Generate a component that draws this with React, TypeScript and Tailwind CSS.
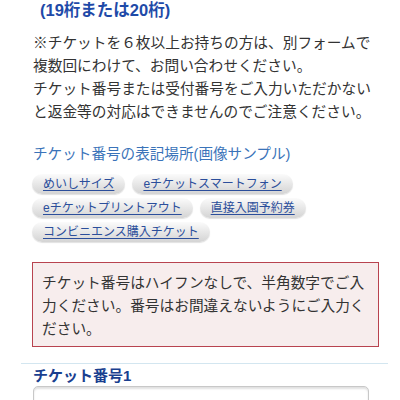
import React from "react";

const font = { fontFamily: '"Liberation Sans", "Noto Sans CJK JP", sans-serif' };

function Pill({ children }: { children: React.ReactNode }) {
  return (
    <a className="inline-flex items-center h-[20px] px-[11px] rounded-full bg-linear-to-b from-[#fbfbfb] to-[#d4d4d4] shadow-[0_1px_1px_rgba(0,0,0,0.12)] text-[12px] leading-[20px] text-[#2b4e9b] underline underline-offset-2 whitespace-nowrap">
      {children}
    </a>
  );
}

export default function App() {
  return (
    <div className="w-[400px] h-[400px] overflow-hidden bg-white" style={font}>
      <div className="pl-[40px] text-[16.5px] font-bold leading-[20px] text-[#1e4aa8]">(19桁または20桁)</div>

      <div className="pl-[33px] mt-[12px] text-[14.7px] leading-[23px] text-[#333333] whitespace-nowrap">
        <div>※チケットを６枚以上お持ちの方は、別フォームで</div>
        <div>複数回にわけて、お問い合わせください。</div>
        <div>チケット番号または受付番号をご入力いただかない</div>
        <div>と返金等の対応はできませんのでご注意ください。</div>
      </div>

      <div className="pl-[33px] mt-[20px] text-[14.6px] leading-[20px] text-[#3a73b9] whitespace-nowrap">
        チケット番号の表記場所(画像サンプル)
      </div>

      <div className="pl-[32px] mt-[10px] flex flex-col gap-[4px]">
        <div className="flex gap-[7px]">
          <Pill>めいしサイズ</Pill>
          <Pill>eチケットスマートフォン</Pill>
        </div>
        <div className="flex gap-[7px]">
          <Pill>eチケットプリントアウト</Pill>
          <Pill>直接入園予約券</Pill>
        </div>
        <div className="flex gap-[7px]">
          <Pill>コンビニエンス購入チケット</Pill>
        </div>
      </div>

      <div className="ml-[32px] w-[347px] mt-[20px] border border-[#b8434f] bg-[#f7eded] pl-[9px] pt-[9px] pb-[5px] text-[14.7px] leading-[23px] text-[#333333] whitespace-nowrap">
        <div>チケット番号はハイフンなしで、半角数字でご入</div>
        <div>力ください。番号はお間違えないようにご入力く</div>
        <div>ださい。</div>
      </div>

      <div className="ml-[21px] w-[367px] mt-[16px] h-px bg-[#d3e6f0]" />

      <div className="pl-[33px] mt-[3px] text-[15px] font-bold leading-[18px] text-[#1a3f8f]">チケット番号1</div>

      <div className="ml-[33px] w-[336px] mt-[1px] h-[40px] rounded-[5px] border border-[#c8c8c8] bg-white shadow-[inset_0_2px_2px_rgba(0,0,0,0.12)]" />
    </div>
  );
}
